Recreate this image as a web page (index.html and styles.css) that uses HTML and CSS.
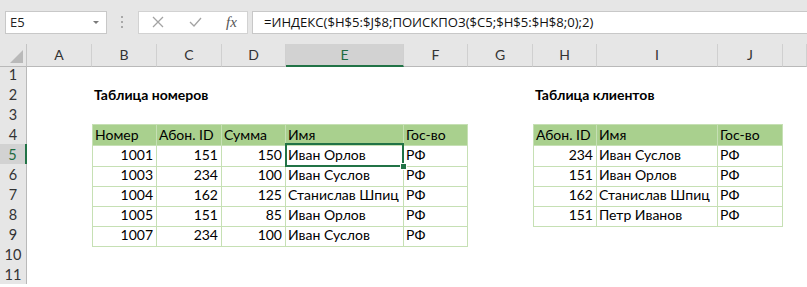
FILE: index.html
```html
<!DOCTYPE html>
<html lang="ru">
<head>
  <meta charset="UTF-8" />
  <title>ИНДЕКС и ПОИСКПОЗ</title>
  <link rel="stylesheet" href="styles.css">
</head>
<body>
  <div class="toolbar">
    <div class="namebox"><span>E5</span><span class="caret"></span></div>
    <div class="grip"><i></i><i></i><i></i></div>
    <div class="fxbox">
      <svg class="ico cancel" width="12" height="12" viewBox="0 0 12 12"><path d="M1 1 L11 11 M11 1 L1 11" /></svg>
      <svg class="ico enter" width="13" height="10" viewBox="0 0 13 10"><path d="M1 5 L5 9 L12 1" /></svg>
      <span class="fx">fx</span>
    </div>
    <div class="formula">=ИНДЕКС($H$5:$J$8;ПОИСКПОЗ($C5;$H$5:$H$8;0);2)</div>
  </div>

  <div class="sheet">
    <div class="row head">
      <span class="corner"><i></i></span>
      <span class="ch">A</span><span class="ch">B</span><span class="ch">C</span><span class="ch">D</span>
      <span class="ch sel">E</span><span class="ch">F</span><span class="ch">G</span><span class="ch">H</span>
      <span class="ch">I</span><span class="ch">J</span><span class="ch"></span>
    </div>

    <div class="row">
      <span class="rh">1</span>
      <span class="c"></span><span class="c"></span><span class="c"></span><span class="c"></span><span class="c"></span>
      <span class="c"></span><span class="c"></span><span class="c"></span><span class="c"></span><span class="c"></span><span class="c"></span>
    </div>

    <div class="row">
      <span class="rh">2</span>
      <span class="c"></span><span class="c b">Таблица номеров</span><span class="c"></span><span class="c"></span><span class="c"></span>
      <span class="c"></span><span class="c"></span><span class="c b">Таблица клиентов</span><span class="c"></span><span class="c"></span><span class="c"></span>
    </div>

    <div class="row">
      <span class="rh">3</span>
      <span class="c"></span><span class="c"></span><span class="c"></span><span class="c"></span><span class="c"></span>
      <span class="c"></span><span class="c"></span><span class="c"></span><span class="c"></span><span class="c"></span><span class="c"></span>
    </div>

    <div class="row">
      <span class="rh">4</span>
      <span class="c"></span>
      <span class="c t th tl">Номер</span><span class="c t th">Абон. ID</span><span class="c t th">Сумма</span>
      <span class="c t th">Имя</span><span class="c t th">Гос-во</span>
      <span class="c"></span>
      <span class="c t th tl">Абон. ID</span><span class="c t th">Имя</span><span class="c t th">Гос-во</span>
      <span class="c"></span>
    </div>

    <div class="row">
      <span class="rh sel">5</span>
      <span class="c"></span>
      <span class="c t tl n">1001</span><span class="c t n">151</span><span class="c t n">150</span>
      <span class="c t active">Иван Орлов</span><span class="c t">РФ</span>
      <span class="c"></span>
      <span class="c t tl n">234</span><span class="c t">Иван Суслов</span><span class="c t">РФ</span>
      <span class="c"></span>
    </div>

    <div class="row">
      <span class="rh">6</span>
      <span class="c"></span>
      <span class="c t tl n">1003</span><span class="c t n">234</span><span class="c t n">100</span>
      <span class="c t">Иван Суслов</span><span class="c t">РФ</span>
      <span class="c"></span>
      <span class="c t tl n">151</span><span class="c t">Иван Орлов</span><span class="c t">РФ</span>
      <span class="c"></span>
    </div>

    <div class="row">
      <span class="rh">7</span>
      <span class="c"></span>
      <span class="c t tl n">1004</span><span class="c t n">162</span><span class="c t n">125</span>
      <span class="c t">Станислав Шпиц</span><span class="c t">РФ</span>
      <span class="c"></span>
      <span class="c t tl n">162</span><span class="c t">Станислав Шпиц</span><span class="c t">РФ</span>
      <span class="c"></span>
    </div>

    <div class="row">
      <span class="rh">8</span>
      <span class="c"></span>
      <span class="c t tl n">1005</span><span class="c t n">151</span><span class="c t n">85</span>
      <span class="c t">Иван Орлов</span><span class="c t">РФ</span>
      <span class="c"></span>
      <span class="c t tl n">151</span><span class="c t">Петр Иванов</span><span class="c t">РФ</span>
      <span class="c"></span>
    </div>

    <div class="row">
      <span class="rh">9</span>
      <span class="c"></span>
      <span class="c t tl n">1007</span><span class="c t n">234</span><span class="c t n">100</span>
      <span class="c t">Иван Суслов</span><span class="c t">РФ</span>
      <span class="c"></span><span class="c"></span><span class="c"></span><span class="c"></span><span class="c"></span>
    </div>

    <div class="row">
      <span class="rh">10</span>
      <span class="c"></span><span class="c"></span><span class="c"></span><span class="c"></span><span class="c"></span>
      <span class="c"></span><span class="c"></span><span class="c"></span><span class="c"></span><span class="c"></span><span class="c"></span>
    </div>

    <div class="row">
      <span class="rh">11</span>
      <span class="c"></span><span class="c"></span><span class="c"></span><span class="c"></span><span class="c"></span>
      <span class="c"></span><span class="c"></span><span class="c"></span><span class="c"></span><span class="c"></span><span class="c"></span>
    </div>
  </div>
</body>
</html>
```

FILE: styles.css
```css
body {
  margin: 0;
  padding: 0;
  width: 807px;
  overflow: hidden;
  font-family: Lato, "Liberation Sans", sans-serif;
  background: #fff;
  color: #000;
}

/* formula bar */
.toolbar {
  display: flex;
  align-items: center;
  height: 44px;
  background: #e6e6e6;
}

.namebox {
  margin-left: 5px;
  width: 102px;
  height: 23px;
  box-sizing: border-box;
  background: #fff;
  border: 1px solid #c8c8c8;
  display: flex;
  align-items: center;
  justify-content: space-between;
  padding: 0 7px 0 4px;
  font-family: "Open Sans", sans-serif;
  font-size: 13px;
  color: #222;
}

.caret {
  border-left: 3px solid transparent;
  border-right: 3px solid transparent;
  border-top: 3px solid #7a7a7a;
}

.grip {
  margin-left: 14px;
  display: flex;
  flex-direction: column;
  gap: 3px;
}

.grip i {
  width: 2px;
  height: 2px;
  background: #a8a8a8;
}

.fxbox {
  margin-left: 15px;
  width: 110px;
  height: 23px;
  box-sizing: border-box;
  background: #fff;
  border: 1px solid #d2d2d2;
  display: flex;
  align-items: center;
}

.ico path {
  fill: none;
  stroke: #a3a3a3;
  stroke-width: 1.3;
}

.cancel {
  margin-left: 13px;
}

.enter {
  margin-left: 25px;
}

.fx {
  margin-left: 24px;
  font-family: "Liberation Serif", serif;
  font-style: italic;
  font-size: 15px;
  color: #555;
}

.formula {
  margin-left: 4px;
  flex: 1;
  height: 23px;
  box-sizing: border-box;
  background: #fff;
  border: 1px solid #c8c8c8;
  border-right: none;
  padding-left: 11px;
  font-family: "Open Sans", sans-serif;
  font-size: 13.1px;
  line-height: 21px;
  color: #111;
  white-space: nowrap;
}

/* grid */
.row {
  display: grid;
  grid-template-columns: 27px 65px 65px 65px 64px 118px 64px 65px 64px 121px 65px 1fr;
  height: 20px;
}

.corner {
  position: relative;
  background: #e6e6e6;
  border-right: 1px solid #c4c4c4;
  border-bottom: 1px solid #b9b9b9;
}

.corner i {
  position: absolute;
  right: 3px;
  bottom: 3px;
  border-left: 13px solid transparent;
  border-bottom: 13px solid #b9b9b9;
}

.ch {
  background: #e6e6e6;
  border-right: 1px solid #d0d0d0;
  border-bottom: 1px solid #b9b9b9;
  text-align: center;
  font-size: 14px;
  line-height: 21px;
  color: #333;
}

.ch.sel {
  background: #d2d2d2;
  border-bottom: 2px solid #217346;
  color: #1e6b40;
}

.rh {
  background: #e6e6e6;
  border-right: 1px solid #b9b9b9;
  border-bottom: 1px solid #d6d6d6;
  text-align: center;
  font-size: 14.5px;
  line-height: 21px;
  color: #333;
}

.rh.sel {
  background: #d2d2d2;
  border-right: 2px solid #217346;
  color: #1e6b40;
}

.row span {
  box-sizing: border-box;
}

.c {
  padding: 0 3px 0 2px;
  font-size: 14px;
  line-height: 22px;
  white-space: nowrap;
}

.b {
  font-weight: bold;
}

.t {
  border-right: 1px solid #c6e0b4;
  border-bottom: 1px solid #c6e0b4;
}

.tl {
  border-left: 1px solid #c6e0b4;
}

.th {
  background: #a9d08e;
  border-top: 1px solid #c6e0b4;
  line-height: 20px;
}

.n {
  text-align: right;
}

.active {
  position: relative;
}

.active::after {
  content: "";
  position: absolute;
  left: -1px;
  top: -1px;
  right: -1px;
  bottom: -1px;
  border: 2px solid #217346;
}

.active::before {
  content: "";
  position: absolute;
  right: -4px;
  bottom: -4px;
  width: 5px;
  height: 5px;
  background: #217346;
  border: 1px solid #fff;
  z-index: 1;
}
```
